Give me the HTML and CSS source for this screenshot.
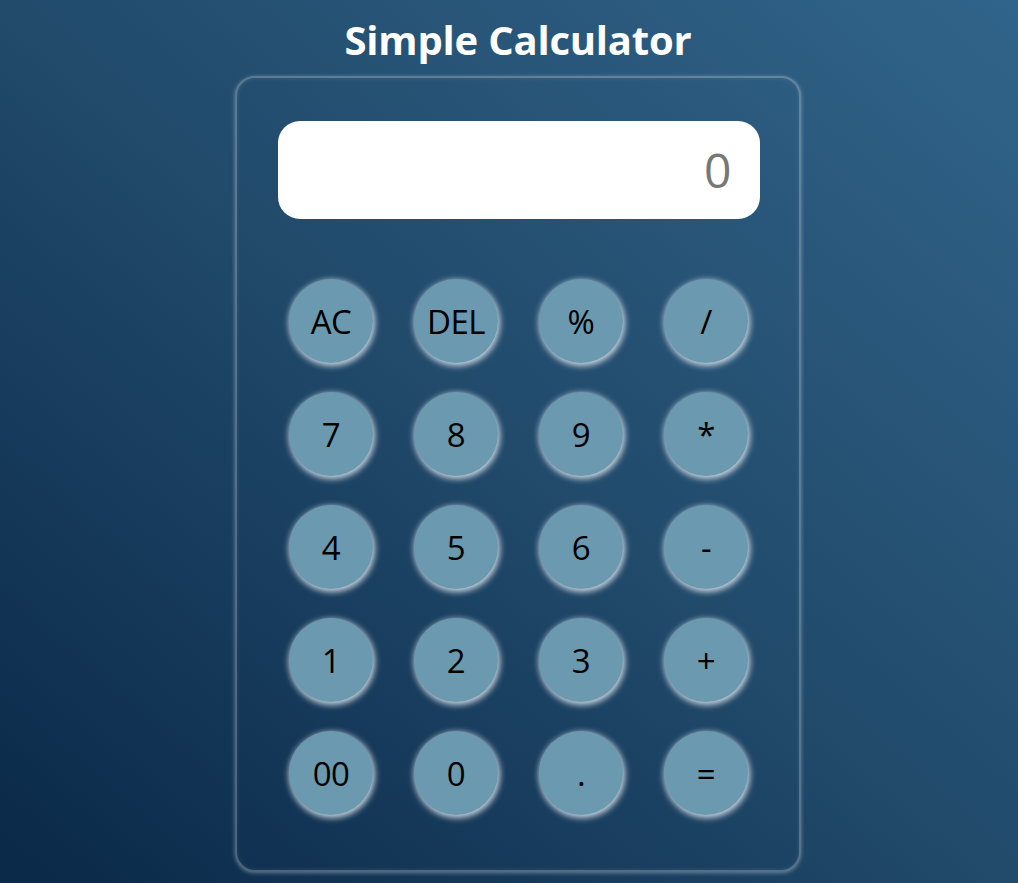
FILE: index.html
```html
<!DOCTYPE html>
<html lang="en">
<head>
<meta charset="UTF-8">
<title>Simple Calculator</title>
<link rel="stylesheet" href="styles.css">
</head>
<body>
<h1 class="title">Simple Calculator</h1>
<div class="calculator">
  <div class="display">0</div>
  <div class="keys">
    <button class="key">AC</button>
    <button class="key">DEL</button>
    <button class="key">%</button>
    <button class="key">/</button>
    <button class="key">7</button>
    <button class="key">8</button>
    <button class="key">9</button>
    <button class="key">*</button>
    <button class="key">4</button>
    <button class="key">5</button>
    <button class="key">6</button>
    <button class="key">-</button>
    <button class="key">1</button>
    <button class="key">2</button>
    <button class="key">3</button>
    <button class="key">+</button>
    <button class="key">00</button>
    <button class="key">0</button>
    <button class="key">.</button>
    <button class="key">=</button>
  </div>
</div>
</body>
</html>
```

FILE: styles.css
```css
* { box-sizing: border-box; }
html, body { height: 100%; }
body {
  margin: 0;
  padding-left: 18px;
  font-family: "Open Sans", "Noto Sans", sans-serif;
  background: linear-gradient(to top right, #0a2848 0%, #214a6b 50%, #31648a 100%);
  display: flex;
  flex-direction: column;
  align-items: center;
  overflow: hidden;
}
.title {
  margin: 12px 0 9px;
  color: #fff;
  font-size: 40px;
  font-weight: 700;
  line-height: 55px;
  letter-spacing: -0.2px;
}
.calculator {
  width: 566px;
  height: 796px;
  padding: 43px 41px 0 42px;
  border: 2px solid rgba(255, 255, 255, 0.25);
  border-radius: 20px;
  box-shadow: 0 1px 4px rgba(255, 255, 255, 0.35), inset 0 0 4px rgba(255, 255, 255, 0.12);
  display: flex;
  flex-direction: column;
  align-items: center;
}
.display {
  width: 482px;
  height: 98px;
  background: #fff;
  border-radius: 22px;
  color: #777;
  font-size: 48px;
  line-height: 98px;
  text-align: right;
  padding-right: 28px;
  font-weight: 400;
}
.keys {
  margin-top: 60px;
  display: grid;
  grid-template-columns: repeat(4, 84px);
  column-gap: 41px;
  row-gap: 29px;
}
.key {
  width: 84px;
  height: 84px;
  border: none;
  border-radius: 50%;
  background: #6b9ab0;
  color: #000;
  font-family: "Open Sans", "Noto Sans", sans-serif;
  font-size: 33px;
  font-weight: 500;
  letter-spacing: -0.5px;
  padding: 0;
  box-shadow: 1px 2px 6px 1px rgba(235, 240, 245, 0.85);
}
```
